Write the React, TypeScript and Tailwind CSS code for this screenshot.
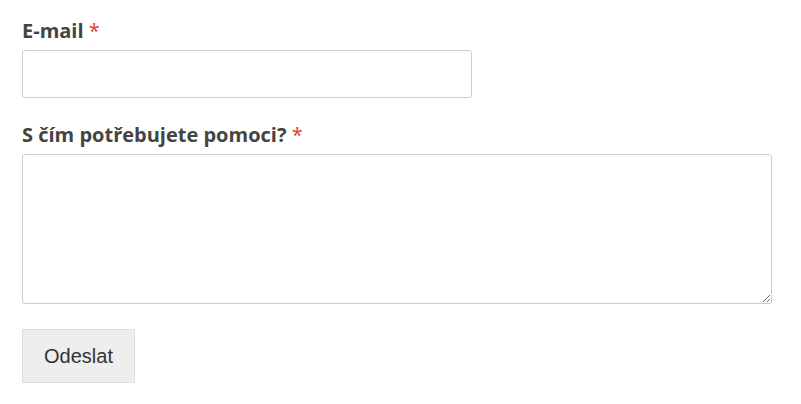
export default function App() {
  return (
    <div className="min-h-screen bg-white px-[22px] pt-[17px]">
      <form className="flex flex-col" onSubmit={(e) => e.preventDefault()}>
        <label className="font-['Open_Sans',sans-serif] text-[20px] font-bold leading-[28px] text-[#444]">
          E-mail <span className="font-normal text-[#f0302c]">*</span>
        </label>
        <input
          type="email"
          className="mt-[5px] h-[48px] w-[450px] rounded-[3px] border border-[#ccc] bg-white outline-none"
        />

        <label className="mt-[23px] font-['Open_Sans',sans-serif] text-[20px] font-bold leading-[28px] text-[#444]">
          S čím potřebujete pomoci? <span className="font-normal text-[#f0302c]">*</span>
        </label>
        <textarea className="mt-[5px] h-[150px] w-[750px] rounded-[3px] border border-[#ccc] bg-white outline-none" />

        <div className="mt-[25px]">
          <button
            type="submit"
            className="h-[54px] w-[113px] border border-[#ddd] bg-[#eee] bg-[radial-gradient(#d6d6d6_0.6px,transparent_0.7px)] bg-[length:4px_4px] font-['Liberation_Sans',Arial,sans-serif] text-[20px] text-[#333]"
          >
            Odeslat
          </button>
        </div>
      </form>
    </div>
  );
}
